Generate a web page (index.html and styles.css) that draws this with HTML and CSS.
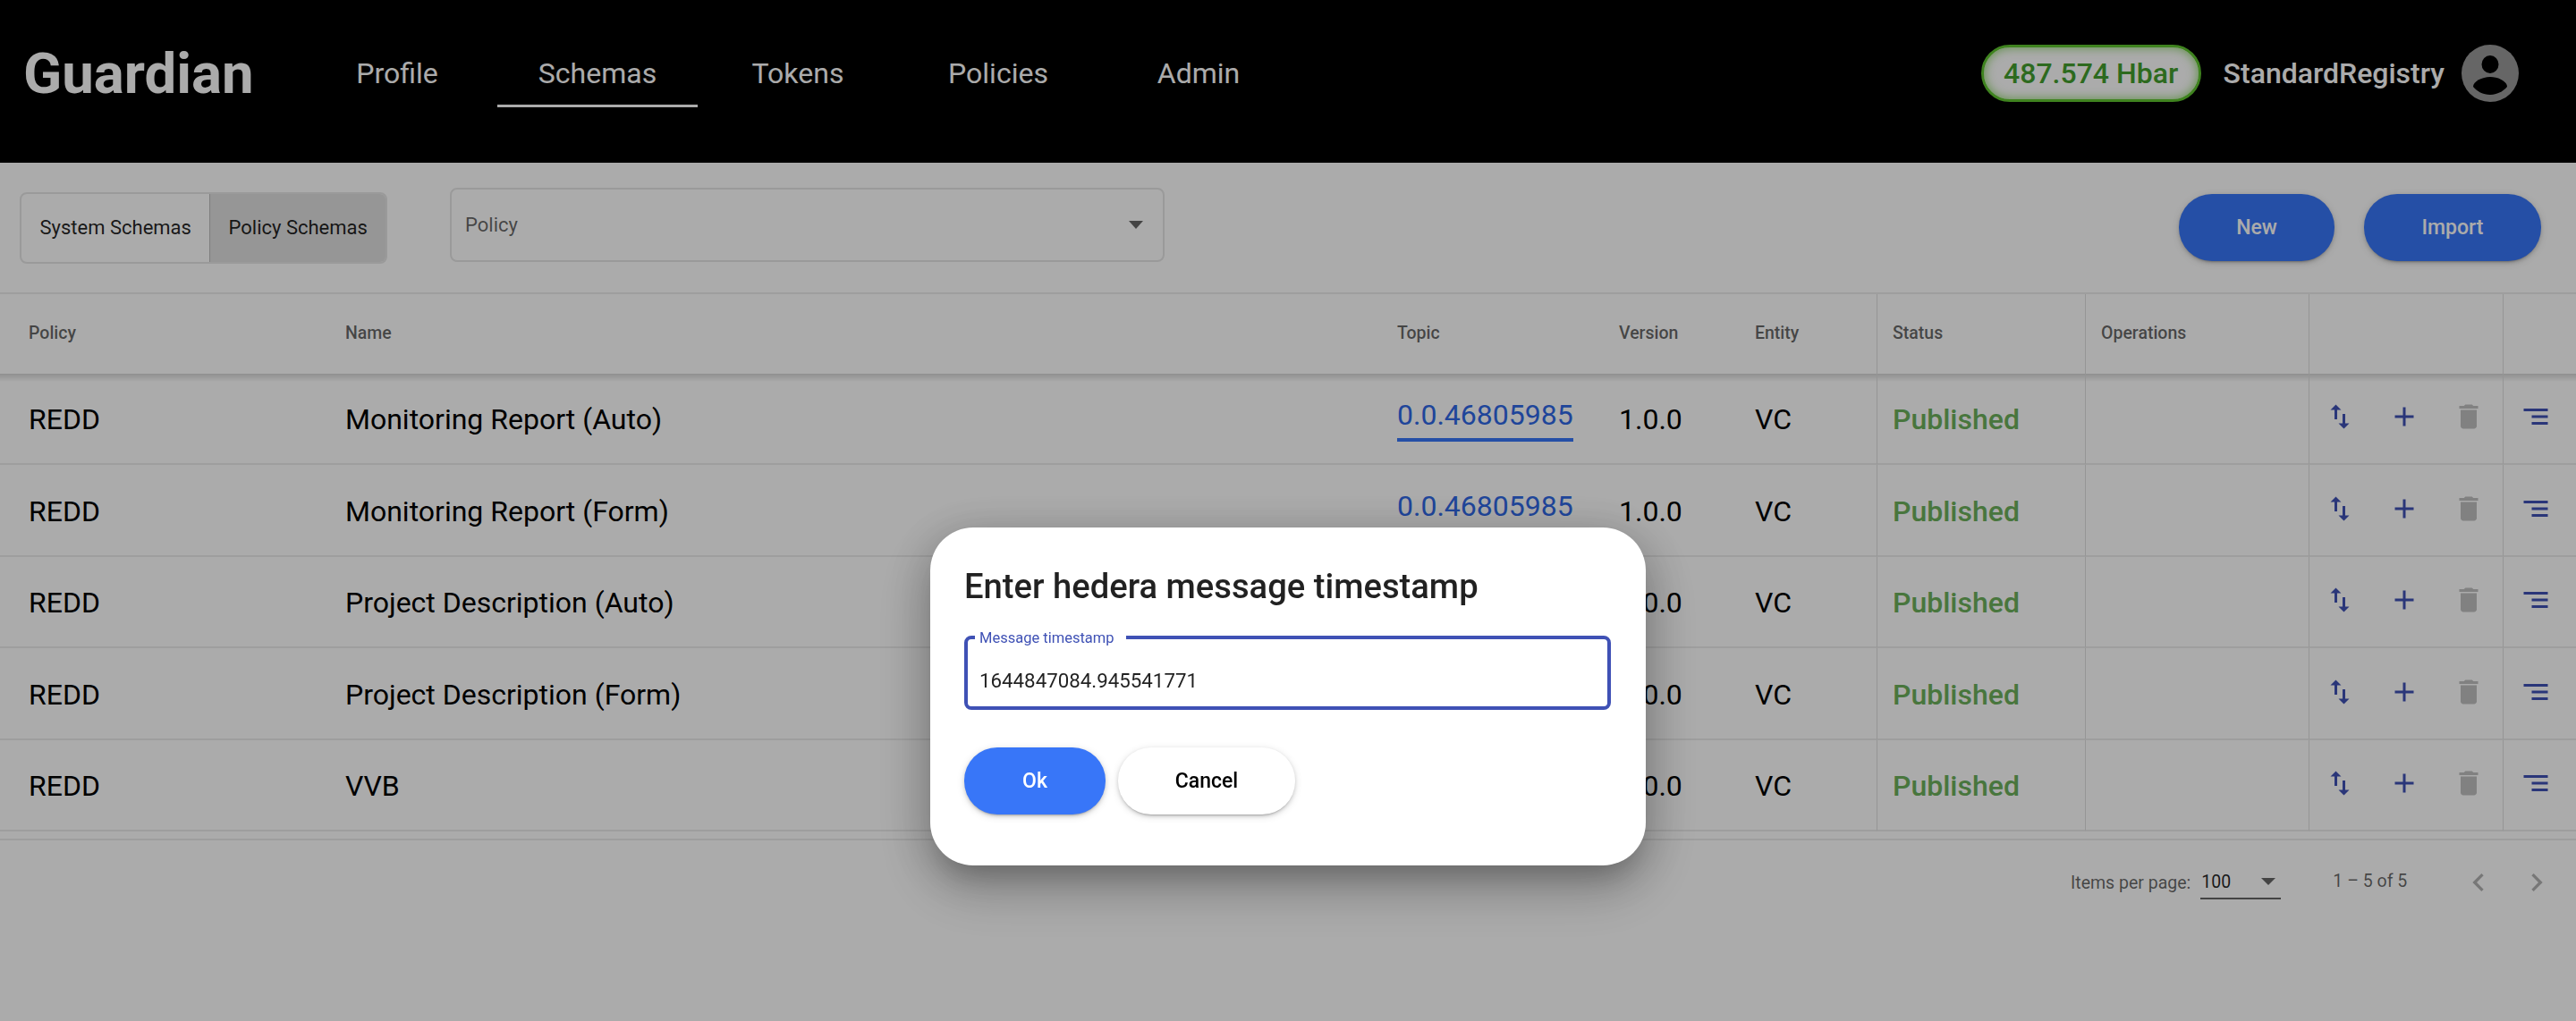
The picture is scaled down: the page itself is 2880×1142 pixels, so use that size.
FILE: index.html
```html
<!DOCTYPE html>
<html lang="en">
<head>
    <meta charset="UTF-8">
    <title>Guardian</title>
    <link rel="stylesheet" href="styles.css">
</head>
<body>
    <svg class="sprite" xmlns="http://www.w3.org/2000/svg">
        <symbol id="i-swap" viewBox="0 0 24 24"><path d="M16 17.01V10h-2v7.01h-3L15 21l4-3.99h-3zM9 3L5 6.99h3V14h2V6.99h3L9 3z"/></symbol>
        <symbol id="i-add" viewBox="0 0 24 24"><path d="M19 13h-6v6h-2v-6H5v-2h6V5h2v6h6v2z"/></symbol>
        <symbol id="i-delete" viewBox="0 0 24 24"><path d="M6 19c0 1.1.9 2 2 2h8c1.1 0 2-.9 2-2V7H6v12zM19 4h-3.5l-1-1h-5l-1 1H5v2h14V4z"/></symbol>
        <symbol id="i-menu" viewBox="0 0 24 24"><path d="M3 6h18v2H3zM9 11h12v2H9zM9 16h12v2H9z"/></symbol>
    </svg>

    <header class="topbar">
        <div class="logo">Guardian</div>
        <nav class="nav">
            <a class="nav-item">Profile</a>
            <a class="nav-item active">Schemas</a>
            <a class="nav-item">Tokens</a>
            <a class="nav-item">Policies</a>
            <a class="nav-item">Admin</a>
        </nav>
        <div class="user-area">
            <div class="balance">487.574 Hbar</div>
            <div class="username">StandardRegistry</div>
            <svg class="avatar" viewBox="0 0 64 64">
                <circle cx="32" cy="32" r="32" fill="#999"/>
                <ellipse cx="32" cy="22" rx="9.5" ry="10" fill="#000"/>
                <path d="M13 47c0-6 10-11 19-11s19 5 19 11c-4 5-11 9-19 9s-15-4-19-9z" fill="#000"/>
            </svg>
        </div>
    </header>

    <div class="toolbar">
        <div class="toggle">
            <div class="toggle-btn">System Schemas</div>
            <div class="toggle-btn selected">Policy Schemas</div>
        </div>
        <div class="select-box">
            <span>Policy</span>
            <i class="caret"></i>
        </div>
        <div class="actions">
            <button class="btn btn-primary btn-new">New</button>
            <button class="btn btn-primary btn-import">Import</button>
        </div>
    </div>

    <table class="schemas">
        <colgroup>
            <col class="c-policy"><col class="c-name"><col class="c-topic"><col class="c-version"><col class="c-entity">
            <col class="c-status"><col class="c-ops"><col class="c-icons"><col class="c-menu">
        </colgroup>
        <thead>
            <tr>
                <th>Policy</th><th>Name</th><th>Topic</th><th>Version</th><th>Entity</th>
                <th class="bordered">Status</th><th class="bordered">Operations</th><th class="bordered"></th><th class="bordered"></th>
            </tr>
        </thead>
        <tbody>
            <tr>
                <td>REDD</td><td>Monitoring Report (Auto)</td>
                <td><a class="topic hovered">0.0.46805985</a></td><td>1.0.0</td><td>VC</td>
                <td class="bordered published">Published</td><td class="bordered"></td>
                <td class="bordered icons"><svg class="icon swap"><use href="#i-swap"/></svg><svg class="icon"><use href="#i-add"/></svg><svg class="icon off"><use href="#i-delete"/></svg></td>
                <td class="bordered icons"><svg class="icon"><use href="#i-menu"/></svg></td>
            </tr>
            <tr>
                <td>REDD</td><td>Monitoring Report (Form)</td>
                <td><a class="topic">0.0.46805985</a></td><td>1.0.0</td><td>VC</td>
                <td class="bordered published">Published</td><td class="bordered"></td>
                <td class="bordered icons"><svg class="icon swap"><use href="#i-swap"/></svg><svg class="icon"><use href="#i-add"/></svg><svg class="icon off"><use href="#i-delete"/></svg></td>
                <td class="bordered icons"><svg class="icon"><use href="#i-menu"/></svg></td>
            </tr>
            <tr>
                <td>REDD</td><td>Project Description (Auto)</td>
                <td><a class="topic">0.0.46805985</a></td><td>1.0.0</td><td>VC</td>
                <td class="bordered published">Published</td><td class="bordered"></td>
                <td class="bordered icons"><svg class="icon swap"><use href="#i-swap"/></svg><svg class="icon"><use href="#i-add"/></svg><svg class="icon off"><use href="#i-delete"/></svg></td>
                <td class="bordered icons"><svg class="icon"><use href="#i-menu"/></svg></td>
            </tr>
            <tr>
                <td>REDD</td><td>Project Description (Form)</td>
                <td><a class="topic">0.0.46805985</a></td><td>1.0.0</td><td>VC</td>
                <td class="bordered published">Published</td><td class="bordered"></td>
                <td class="bordered icons"><svg class="icon swap"><use href="#i-swap"/></svg><svg class="icon"><use href="#i-add"/></svg><svg class="icon off"><use href="#i-delete"/></svg></td>
                <td class="bordered icons"><svg class="icon"><use href="#i-menu"/></svg></td>
            </tr>
            <tr>
                <td>REDD</td><td>VVB</td>
                <td><a class="topic">0.0.46805985</a></td><td>1.0.0</td><td>VC</td>
                <td class="bordered published">Published</td><td class="bordered"></td>
                <td class="bordered icons"><svg class="icon swap"><use href="#i-swap"/></svg><svg class="icon"><use href="#i-add"/></svg><svg class="icon off"><use href="#i-delete"/></svg></td>
                <td class="bordered icons"><svg class="icon"><use href="#i-menu"/></svg></td>
            </tr>
        </tbody>
    </table>

    <div class="paginator">
        <span class="per-page-label">Items per page:</span>
        <div class="per-page"><span>100</span><i class="caret"></i></div>
        <span class="range">1 – 5 of 5</span>
        <svg class="chevron prev" viewBox="0 0 24 24"><path d="M15.41 7.41L14 6l-6 6 6 6 1.41-1.41L10.83 12z"/></svg>
        <svg class="chevron next" viewBox="0 0 24 24"><path d="M10 6L8.59 7.41 13.17 12l-4.58 4.59L10 18l6-6z"/></svg>
    </div>

    <div class="backdrop"></div>

    <div class="dialog">
        <h2 class="dialog-title">Enter hedera message timestamp</h2>
        <div class="field">
            <label class="field-label">Message timestamp</label>
            <div class="field-value">1644847084.945541771</div>
        </div>
        <div class="dialog-actions">
            <button class="btn btn-primary btn-ok">Ok</button>
            <button class="btn btn-cancel">Cancel</button>
        </div>
    </div>
</body>
</html>
```

FILE: styles.css
```css
/* General */
html, body {
    margin: 0;
    height: 100%;
    overflow: hidden;
}

body {
    font-family: Roboto, "Liberation Sans", sans-serif;
    background: #fff;
    color: rgba(0, 0, 0, 0.87);
}

.sprite {
    display: none;
}

/* Top bar */
.topbar {
    display: flex;
    align-items: center;
    box-sizing: border-box;
    height: 182px;
    padding: 0 64px 18px 26px;
    background: #000;
    color: #fff;
}

.logo {
    width: 306px;
    font-size: 63.5px;
    font-weight: 700;
}

.nav {
    display: flex;
}

.nav-item {
    box-sizing: border-box;
    width: 224px;
    height: 76px;
    padding-top: 16px;
    border-bottom: 3px solid transparent;
    font-size: 32px;
    line-height: 44px;
    text-align: center;
}

.nav-item.active {
    border-bottom-color: #fff;
}

.user-area {
    display: flex;
    align-items: center;
    margin-left: auto;
}

.balance {
    display: flex;
    align-items: center;
    justify-content: center;
    box-sizing: border-box;
    width: 246px;
    height: 64px;
    border: 3px solid #5fc42f;
    border-radius: 32px;
    background: #fff;
    box-shadow: inset 0 0 12px rgba(95, 196, 47, 0.75);
    color: #449f2f;
    font-size: 32px;
    font-weight: 500;
}

.username {
    margin-left: 25px;
    font-size: 32px;
    font-weight: 500;
}

.avatar {
    width: 64px;
    height: 64px;
    margin-left: 19px;
}

/* Toolbar */
.toolbar {
    display: flex;
    align-items: center;
    box-sizing: border-box;
    height: 147px;
    padding: 0 39px 0 22px;
    border-bottom: 2px solid #ececec;
}

.toggle {
    display: flex;
    box-sizing: border-box;
    width: 411px;
    height: 80px;
    border: 2px solid #e6e6e6;
    border-radius: 8px;
    overflow: hidden;
}

.toggle-btn {
    display: flex;
    align-items: center;
    justify-content: center;
    width: 212px;
    font-size: 22px;
}

.toggle-btn.selected {
    width: 197px;
    border-left: 1px solid #bdbdbd;
    background: #e0e0e0;
}

.select-box {
    display: flex;
    align-items: center;
    justify-content: space-between;
    box-sizing: border-box;
    width: 799px;
    height: 83px;
    margin: 0 0 6px 70px;
    padding: 0 22px 0 15px;
    border: 2px solid #e6e6e6;
    border-radius: 8px;
    color: rgba(0, 0, 0, 0.6);
    font-size: 22px;
}

.caret {
    width: 0;
    height: 0;
    border-left: 8px solid transparent;
    border-right: 8px solid transparent;
    border-top: 9px solid rgba(0, 0, 0, 0.6);
}

.actions {
    display: flex;
    gap: 33px;
    margin-left: auto;
}

.btn {
    height: 75px;
    border: none;
    border-radius: 37px;
    font-family: inherit;
    font-size: 23px;
    font-weight: 500;
    box-shadow: 0 3px 2px -2px rgba(0, 0, 0, 0.2), 0 2px 4px 0 rgba(0, 0, 0, 0.14), 0 2px 10px 0 rgba(0, 0, 0, 0.12);
}

.btn-primary {
    background: #3876f8;
    color: #fff;
}

.btn-new {
    width: 174px;
}

.btn-import {
    width: 198px;
}

/* Table */
.schemas {
    width: 100%;
    border-collapse: separate;
    border-spacing: 0;
    table-layout: fixed;
}

.c-policy { width: 354px; }
.c-name { width: 1176px; }
.c-topic { width: 248px; }
.c-version { width: 152px; }
.c-entity { width: 168px; }
.c-status { width: 233px; }
.c-ops { width: 250px; }
.c-icons { width: 217px; }

.schemas th {
    box-sizing: border-box;
    height: 89px;
    padding: 0 0 2px 32px;
    color: rgba(0, 0, 0, 0.6);
    font-size: 19.5px;
    font-weight: 500;
    text-align: left;
}

.schemas td {
    box-sizing: border-box;
    height: 102px;
    padding: 2px 0 0 32px;
    border-bottom: 2px solid #ececec;
    color: #000;
    font-size: 32px;
}

/* the table rows are 102.4px in the original, so alternate */
.schemas tbody tr:nth-child(even) td {
    height: 103px;
}

/* header shadow falling on the first row */
.schemas tbody tr:first-child td {
    background: linear-gradient(rgba(0, 0, 0, 0.16), rgba(0, 0, 0, 0) 9px);
}

.schemas .bordered {
    padding-left: 17px;
    border-left: 1px solid #dedede;
}

.schemas .icons {
    padding-left: 0;
    font-size: 0;
}

.schemas .topic {
    display: inline-block;
    margin-top: -4px;
    padding-bottom: 6px;
    border-bottom: 4px solid transparent;
    color: #2f68e6;
    line-height: 40px;
}

.schemas .topic.hovered {
    border-bottom-color: #3876f8;
}

.schemas .published {
    color: #6cb05c;
    font-weight: 500;
}

.icon {
    width: 72px;
    height: 36px;
    margin-bottom: 6px;
    fill: #3f51b5;
}

.icon.swap {
    margin-left: -2px;
}

.icon.off {
    fill: #c0c0c0;
}

/* Paginator */
.paginator {
    display: flex;
    align-items: center;
    height: 94px;
    margin-top: 8px;
    padding: 0 0 4px 2315px;
    border-top: 2px solid #ececec;
    color: rgba(0, 0, 0, 0.6);
    font-size: 19.5px;
}

.per-page {
    display: flex;
    align-items: center;
    justify-content: space-between;
    box-sizing: border-box;
    width: 90px;
    height: 38px;
    margin: 0 58px 0 11px;
    padding: 0 6px 0 1px;
    border-bottom: 2px solid rgba(0, 0, 0, 0.6);
    color: rgba(0, 0, 0, 0.87);
}

.per-page .caret {
    border-left-width: 8px;
    border-right-width: 8px;
    border-top-width: 8px;
}

.range {
    margin-bottom: 4px;
}

.chevron {
    width: 40px;
    height: 40px;
    fill: rgba(0, 0, 0, 0.3);
}

.chevron.prev {
    margin-left: 60px;
}

.chevron.next {
    margin-left: 25px;
}

/* Dialog */
.backdrop {
    position: fixed;
    inset: 0;
    background: rgba(0, 0, 0, 0.33);
}

.dialog {
    position: fixed;
    left: 1040px;
    top: 590px;
    box-sizing: border-box;
    width: 800px;
    height: 378px;
    padding: 39px 38px;
    border-radius: 48px;
    background: #fff;
    box-shadow: 0 22px 30px -14px rgba(0, 0, 0, 0.2), 0 24px 60px 6px rgba(0, 0, 0, 0.2), 0 10px 50px 8px rgba(0, 0, 0, 0.12);
}

.dialog-title {
    margin: 0;
    font-size: 38.2px;
    font-weight: 500;
    line-height: 54px;
}

.field {
    position: relative;
    box-sizing: border-box;
    width: 723px;
    height: 83px;
    margin-top: 28px;
    padding: 30px 0 0 13px;
    border: 4px solid #3f51b5;
    border-radius: 8px;
}

.field-label {
    position: absolute;
    left: 8px;
    top: -11px;
    padding: 0 13px 0 5px;
    background: #fff;
    color: #3f51b5;
    font-size: 16.5px;
}

.field-value {
    font-size: 22.3px;
    line-height: 32px;
}

.dialog-actions {
    display: flex;
    gap: 14px;
    margin-top: 42px;
}

.btn-ok {
    width: 158px;
}

.btn-cancel {
    width: 198px;
    background: #fff;
    color: #000;
}
```
